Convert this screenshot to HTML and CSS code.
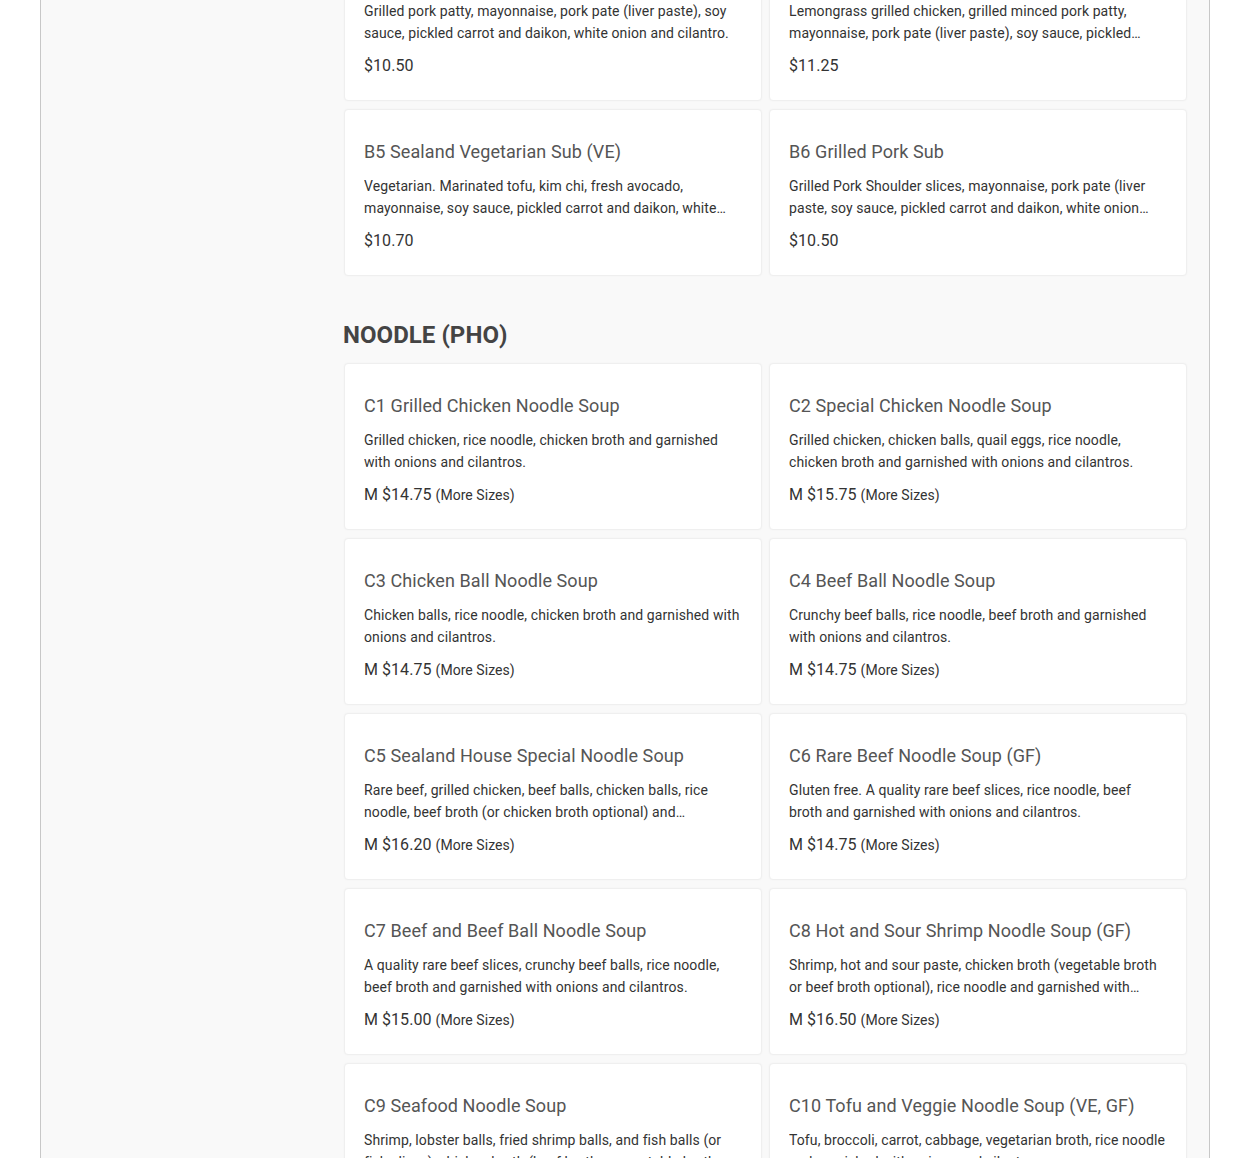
FILE: index.html
```html
<!DOCTYPE html>
<html lang="en">
<head>
<meta charset="utf-8">
<title>Sealand Menu</title>
<link rel="stylesheet" href="styles.css">
</head>
<body>
<div class="page">
  <aside class="sidebar"></aside>
  <main class="menu">
    <section class="category first">
      <div class="grid">
        <div class="card">
          <div class="title">B3 Grilled Pork Patty Sub</div>
          <div class="desc">Grilled pork patty, mayonnaise, pork pate (liver paste), soy sauce, pickled carrot and daikon, white onion and cilantro.</div>
          <div class="price">$10.50</div>
        </div>
        <div class="card">
          <div class="title">B4 Sealand Special Sub</div>
          <div class="desc">Lemongrass grilled chicken, grilled minced pork patty, mayonnaise, pork pate (liver paste), soy sauce, pickled carrot and daikon, white onion and cilantro.</div>
          <div class="price">$11.25</div>
        </div>
        <div class="card">
          <div class="title">B5 Sealand Vegetarian Sub (VE)</div>
          <div class="desc">Vegetarian. Marinated tofu, kim chi, fresh avocado, mayonnaise, soy sauce, pickled carrot and daikon, white onion and cilantro.</div>
          <div class="price">$10.70</div>
        </div>
        <div class="card">
          <div class="title">B6 Grilled Pork Sub</div>
          <div class="desc">Grilled Pork Shoulder slices, mayonnaise, pork pate (liver paste, soy sauce, pickled carrot and daikon, white onion and cilantro.</div>
          <div class="price">$10.50</div>
        </div>
      </div>
    </section>
    <section class="category">
      <h2 class="cat-title">NOODLE (PHO)</h2>
      <div class="grid">
        <div class="card">
          <div class="title">C1 Grilled Chicken Noodle Soup</div>
          <div class="desc">Grilled chicken, rice noodle, chicken broth and garnished with onions and cilantros.</div>
          <div class="price">M $14.75 <span class="more">(More Sizes)</span></div>
        </div>
        <div class="card">
          <div class="title">C2 Special Chicken Noodle Soup</div>
          <div class="desc">Grilled chicken, chicken balls, quail eggs, rice noodle, chicken broth and garnished with onions and cilantros.</div>
          <div class="price">M $15.75 <span class="more">(More Sizes)</span></div>
        </div>
        <div class="card">
          <div class="title">C3 Chicken Ball Noodle Soup</div>
          <div class="desc">Chicken balls, rice noodle, chicken broth and garnished with onions and cilantros.</div>
          <div class="price">M $14.75 <span class="more">(More Sizes)</span></div>
        </div>
        <div class="card">
          <div class="title">C4 Beef Ball Noodle Soup</div>
          <div class="desc">Crunchy beef balls, rice noodle, beef broth and garnished with onions and cilantros.</div>
          <div class="price">M $14.75 <span class="more">(More Sizes)</span></div>
        </div>
        <div class="card">
          <div class="title">C5 Sealand House Special Noodle Soup</div>
          <div class="desc">Rare beef, grilled chicken, beef balls, chicken balls, rice noodle, beef broth (or chicken broth optional) and garnished with onions and cilantros.</div>
          <div class="price">M $16.20 <span class="more">(More Sizes)</span></div>
        </div>
        <div class="card">
          <div class="title">C6 Rare Beef Noodle Soup (GF)</div>
          <div class="desc">Gluten free. A quality rare beef slices, rice noodle, beef broth and garnished with onions and cilantros.</div>
          <div class="price">M $14.75 <span class="more">(More Sizes)</span></div>
        </div>
        <div class="card">
          <div class="title">C7 Beef and Beef Ball Noodle Soup</div>
          <div class="desc">A quality rare beef slices, crunchy beef balls, rice noodle, beef broth and garnished with onions and cilantros.</div>
          <div class="price">M $15.00 <span class="more">(More Sizes)</span></div>
        </div>
        <div class="card">
          <div class="title">C8 Hot and Sour Shrimp Noodle Soup (GF)</div>
          <div class="desc">Shrimp, hot and sour paste, chicken broth (vegetable broth or beef broth optional), rice noodle and garnished with onions and cilantros.</div>
          <div class="price">M $16.50 <span class="more">(More Sizes)</span></div>
        </div>
        <div class="card">
          <div class="title">C9 Seafood Noodle Soup</div>
          <div class="desc">Shrimp, lobster balls, fried shrimp balls, and fish balls (or fish slices), chicken broth (beef broth or vegetable broth optional), rice noodle and garnished with onions and cilantros.</div>
          <div class="price">M $16.50 <span class="more">(More Sizes)</span></div>
        </div>
        <div class="card">
          <div class="title">C10 Tofu and Veggie Noodle Soup (VE, GF)</div>
          <div class="desc">Tofu, broccoli, carrot, cabbage, vegetarian broth, rice noodle and garnished with onions and cilantros.</div>
          <div class="price">M $14.75 <span class="more">(More Sizes)</span></div>
        </div>
      </div>
    </section>
  </main>
</div>
</body>
</html>
```

FILE: styles.css
```css
html, body {
  margin: 0;
  padding: 0;
  background: #ffffff;
  height: 100%;
  overflow: hidden;
}

body {
  font-family: Roboto, "Liberation Sans", Arial, sans-serif;
  color: #333333;
}

.page {
  margin: 0 40px;
  width: 1168px;
  height: 1158px;
  overflow: hidden;
  background: #f9f9f9;
  border-left: 1px solid #c8c8c8;
  border-right: 1px solid #c8c8c8;
  display: flex;
}

.sidebar {
  width: 302px;
  flex: none;
}

.menu {
  width: 845px;
  flex: none;
}

.category.first {
  margin-top: -66px;
}

.cat-title {
  margin: 45px 0 13px 0;
  font-size: 24px;
  line-height: 29px;
  font-weight: 700;
  color: #444444;
  letter-spacing: 0.05px;
}

.grid {
  display: grid;
  grid-template-columns: 418px 418px;
  column-gap: 7px;
  row-gap: 8px;
  padding-left: 1px;
}

.card {
  box-sizing: border-box;
  height: 167px;
  background: #ffffff;
  border: 1px solid #efefef;
  border-radius: 4px;
  box-shadow: 0 0 2px rgba(0, 0, 0, 0.04);
  padding: 30px 20px 0 19px;
  overflow: hidden;
}

.title {
  font-size: 18px;
  line-height: 24px;
  color: #555555;
  white-space: nowrap;
  letter-spacing: 0.08px;
}

.desc {
  margin-top: 11px;
  font-size: 14px;
  line-height: 22px;
  color: #333333;
  letter-spacing: 0.1px;
  display: -webkit-box;
  -webkit-line-clamp: 2;
  -webkit-box-orient: vertical;
  overflow: hidden;
  height: 44px;
}

.price {
  margin-top: 11px;
  font-size: 16px;
  line-height: 22px;
  color: #333333;
  letter-spacing: 0.05px;
}

.more {
  font-size: 14px;
}
```
